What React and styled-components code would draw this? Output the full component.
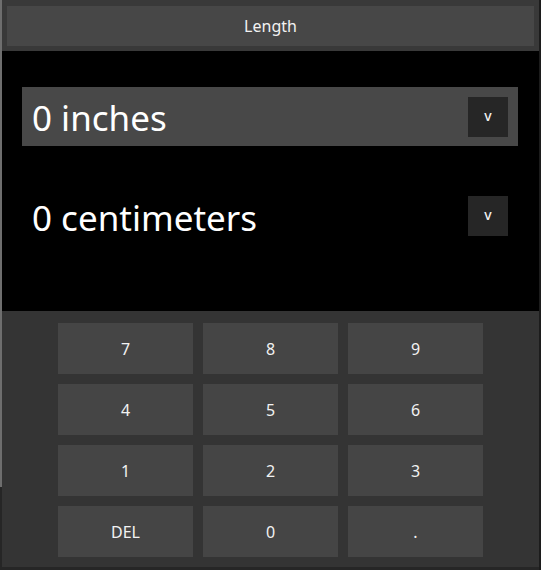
import React from "react";
import styled, { createGlobalStyle } from "styled-components";

const Global = createGlobalStyle`
  html, body { margin: 0; padding: 0; }
  body {
    width: 541px;
    height: 570px;
    overflow: hidden;
    background: linear-gradient(to bottom, #6e6e6e 0, #6e6e6e 487px, #262626 487px);
    font-family: "Noto Sans", "Open Sans", sans-serif;
  }
`;

const Page = styled.div`
  width: 541px;
  height: 570px;
  box-sizing: border-box;
  padding: 0 2px 3px 2px;
  background: linear-gradient(to right, transparent 0, transparent 539px, #1c1c1c 539px);
`;

const Window = styled.div`
  width: 537px;
  height: 567px;
  display: flex;
  flex-direction: column;
  background: #343434;
`;

const Header = styled.div`
  height: 51px;
  box-sizing: border-box;
  padding: 6px 5px 5px 5px;
  background: #393939;
  display: flex;
`;

const TitleButton = styled.button`
  flex: 1;
  border: none;
  margin: 0;
  background: #474747;
  color: #f2f2f2;
  font-family: inherit;
  font-size: 16px;
  display: flex;
  align-items: center;
  justify-content: center;
  padding: 0;
`;

const Display = styled.div`
  height: 260px;
  background: #000;
  box-sizing: border-box;
  padding: 36px 21px 0 20px;
  display: flex;
  flex-direction: column;
  gap: 40px;
`;

const ValueRow = styled.div`
  height: 59px;
  background: ${(p) => (p.$active ? "#484848" : "transparent")};
  display: flex;
  align-items: center;
  justify-content: space-between;
  padding: 0 10px 0 10px;
  box-sizing: border-box;
`;

const ValueText = styled.span`
  color: #fff;
  font-size: 35px;
  line-height: 1;
  position: relative;
  top: ${(p) => (p.$active ? "1px" : "2px")};
`;

const DropButton = styled.button`
  width: 40px;
  height: 40px;
  border: none;
  margin: 0;
  padding: 0;
  background: #262626;
  color: #f0f0f0;
  font-family: inherit;
  font-size: 14px;
  font-weight: 500;
  display: flex;
  align-items: center;
  justify-content: center;
  padding-bottom: 3px;
  box-sizing: border-box;
`;

const Keypad = styled.div`
  flex: 1;
  padding-top: 12px;
  display: grid;
  grid-template-columns: repeat(3, 135px);
  grid-auto-rows: 51px;
  column-gap: 10px;
  row-gap: 10px;
  justify-content: center;
  align-content: start;
`;

const Key = styled.button`
  border: none;
  margin: 0;
  padding: 0;
  background: #454545;
  color: #f2f2f2;
  font-family: inherit;
  font-size: 16px;
  display: flex;
  align-items: center;
  justify-content: center;
`;

const keys = ["7", "8", "9", "4", "5", "6", "1", "2", "3", "DEL", "0", "."];

export default function App() {
  return (
    <>
      <Global />
      <Page>
        <Window>
          <Header>
            <TitleButton>Length</TitleButton>
          </Header>
          <Display>
            <ValueRow $active>
              <ValueText $active>0 inches</ValueText>
              <DropButton>v</DropButton>
            </ValueRow>
            <ValueRow>
              <ValueText>0 centimeters</ValueText>
              <DropButton>v</DropButton>
            </ValueRow>
          </Display>
          <Keypad>
            {keys.map((k) => (
              <Key key={k}>{k}</Key>
            ))}
          </Keypad>
        </Window>
      </Page>
    </>
  );
}
